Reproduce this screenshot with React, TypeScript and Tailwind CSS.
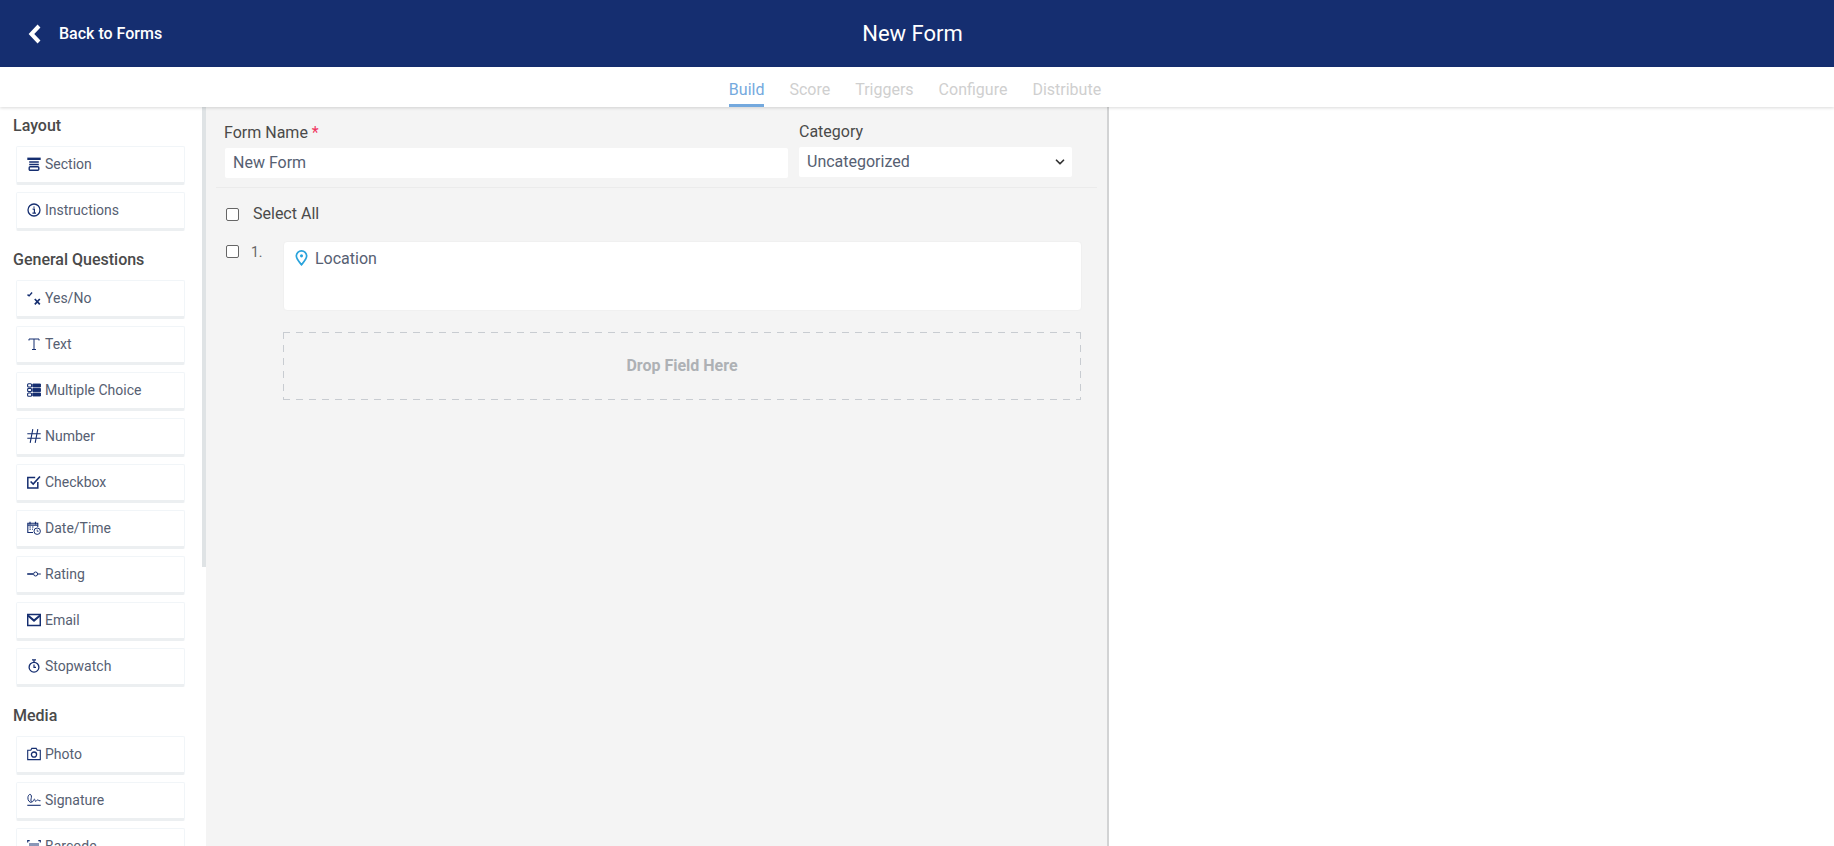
import type { ReactNode } from 'react';
import { ChevronDown } from 'lucide-react';

function Ic({ children }: { children: ReactNode }) {
  return (
    <svg className="w-[14px] h-[14px] shrink-0 text-[#152e70]" viewBox="0 0 14 14" fill="none" stroke="currentColor" strokeWidth={1.2}>
      {children}
    </svg>
  );
}

const icons: Record<string, ReactNode> = {
  Section: (
    <Ic>
      <path d="M0.3 0.6h13.4v2.4h-13.4z" fill="currentColor" stroke="none" />
      <path d="M2.2 5h9.6M2.2 7.5h9.6" strokeWidth={1.6} />
      <rect x="2.2" y="9.8" width="9.6" height="3.4" rx="1" strokeWidth={1.4} />
    </Ic>
  ),
  Instructions: (
    <Ic>
      <circle cx="7" cy="7" r="6" strokeWidth={1.3} />
      <path d="M7 3.4v1.4M5.6 6.2H7.4V10M5.4 10.2h3.6" strokeWidth={1.2} />
    </Ic>
  ),
  'Yes/No': (
    <Ic>
      <path d="M0.5 3.6l1.6 1.3 3-3.4" strokeWidth={1.4} />
      <path d="M7.8 8l5 5.4M12.8 8l-5 5.4" strokeWidth={1.7} />
    </Ic>
  ),
  Text: (
    <Ic>
      <path d="M2 3.5V2h10v1.5M7 2v10.5M5 12.5h4" strokeWidth={1} />
    </Ic>
  ),
  'Multiple Choice': (
    <Ic>
      <rect x="0.6" y="0.8" width="4" height="3.2" rx="1" strokeWidth={1.1} />
      <rect x="0.6" y="5.4" width="4" height="3.2" rx="1" strokeWidth={1.1} />
      <rect x="0.6" y="10" width="4" height="3.2" rx="1" strokeWidth={1.1} />
      <path d="M5.8 1h7.7v3H5.8zM5.8 5.5h7.7v3H5.8zM5.8 10h7.7v3H5.8z" strokeWidth={0.9} fill="currentColor" />
    </Ic>
  ),
  Number: (
    <Ic>
      <path d="M5.8 0.2L3.2 13.8M10.8 0.2L8.2 13.8M0.3 4.8h13.4M0.3 9.2h13.4" strokeWidth={1.1} />
    </Ic>
  ),
  Checkbox: (
    <Ic>
      <path d="M10.8 7v6H0.8V2.6h7.4" strokeWidth={1.5} />
      <path d="M3.6 6.5l2.6 2.6 6.8-7.6" strokeWidth={1.6} />
    </Ic>
  ),
  'Date/Time': (
    <Ic>
      <path d="M6 11.5H0.8V2.2h10V6" strokeWidth={1.1} />
      <path d="M3 0.8v2.4M8.5 0.8v2.4M0.8 4.2h10" strokeWidth={1.2} />
      <path d="M2.4 6h1.5M5 6h1.5M2.4 8.2h1.5M5 8.2h1" strokeWidth={1} />
      <circle cx="10.2" cy="10.2" r="3.2" strokeWidth={1} />
      <path d="M10.2 8.6v1.7h1.4" strokeWidth={0.8} />
    </Ic>
  ),
  Rating: (
    <Ic>
      <path d="M0.2 7h6" strokeWidth={1.6} />
      <circle cx="8.6" cy="7" r="2" strokeWidth={1} />
      <path d="M10.8 7h3" strokeWidth={1} />
    </Ic>
  ),
  Email: (
    <Ic>
      <rect x="0.7" y="1.5" width="12.6" height="11" strokeWidth={1.5} />
      <path d="M1 2.6l6 5L13 2.6" strokeWidth={2} />
    </Ic>
  ),
  Stopwatch: (
    <Ic>
      <circle cx="7" cy="8.2" r="4.9" strokeWidth={1.3} />
      <path d="M5 0.8h4M7 1v2.2M7 5.4v3h2" strokeWidth={1.2} />
    </Ic>
  ),
  Photo: (
    <Ic>
      <path d="M0.7 3.2h3.1l1-1.8h4.4l1 1.8h3.1v9.4H0.7z" strokeWidth={1.1} />
      <circle cx="7" cy="7.6" r="2.6" strokeWidth={1.3} />
    </Ic>
  ),
  Signature: (
    <Ic>
      <path d="M4.5 9.5C2.5 9.5 0.8 7.5 0.9 4.8 1 2.8 2 1.2 3.2 1.4c1.3.2 1.5 2.4.9 4.4C3.7 7.4 4 9 5 9c1.2 0 1.6-2.8 2.4-2.8.7 0 .5 2.2 1.2 2.2.9 0 1.4-1.6 2.2-1.6.6 0 .7.9 1.2.9H13.5" strokeWidth={1} />
      <path d="M0.3 12.3h13.4" strokeWidth={1.1} />
    </Ic>
  ),
  Barcode: (
    <Ic>
      <path d="M0.7 3.5V1.6h2M11.3 1.6h2v1.9M0.7 10.5v1.9h2M11.3 12.4h2v-1.9" strokeWidth={1.1} />
      <path d="M3 4v6M5 4v6M7 4v6M9 4v6M11 4v6" strokeWidth={1} />
    </Ic>
  ),
};

function FieldCard({ label }: { label: string }) {
  return (
    <div className="ml-[16px] mb-[7px] h-[39px] w-[169px] shrink-0 flex items-center gap-[4px] pl-[10px] pb-[1px] bg-white rounded-[2px] border border-[#f1f5f8] border-b-[3px] border-b-[#eceff1] text-[14px] text-[#566072]">
      {icons[label]}
      <span>{label}</span>
    </div>
  );
}

function Group({ title, items, cls }: { title: string; items: string[]; cls: string }) {
  return (
    <div className="flex flex-col">
      <h3 className={`pl-[13px] text-[16px] font-medium leading-[20px] text-[#4a4a4a] ${cls}`}>{title}</h3>
      {items.map((item) => (
        <FieldCard key={item} label={item} />
      ))}
    </div>
  );
}

export default function App() {
  const tabs = ['Build', 'Score', 'Triggers', 'Configure', 'Distribute'];

  return (
    <div className="h-[846px] w-[1834px] overflow-hidden flex flex-col bg-white font-['Roboto',sans-serif]">
      {/* Top bar */}
      <header className="relative h-[67px] shrink-0 flex items-center justify-center pr-[9px] bg-[#152e70]">
        <div className="absolute left-[28px] top-[22px] flex items-center gap-[18px] text-white">
          <svg className="w-[13px] h-[20px]" viewBox="0 0 13 20" fill="none" stroke="currentColor" strokeWidth={4}>
            <path d="M11 2L3.4 10l7.6 8" />
          </svg>
          <span className="text-[16px] font-medium">Back to Forms</span>
        </div>
        <h1 className="text-[22px] text-white">New Form</h1>
      </header>

      {/* Tabs */}
      <nav className="relative z-10 h-[40px] shrink-0 flex justify-center gap-[25px] pr-[4px] bg-white shadow-[0_1px_3px_rgba(0,0,0,0.15)] text-[16px] text-[#cfcfcf]">
        {tabs.map((tab, i) => (
          <span
            key={tab}
            className={`h-[40px] pt-[11px] leading-[24px] ${i === 0 ? 'text-[#74a9de] border-b-[3px] border-[#74a9de]' : ''}`}
          >
            {tab}
          </span>
        ))}
      </nav>

      <div className="flex flex-1 min-h-0">
        {/* Field palette */}
        <aside className="relative w-[206px] shrink-0 overflow-hidden bg-white pt-[9px]">
          <Group title="Layout" cls="mb-[10px]" items={['Section', 'Instructions']} />
          <Group title="General Questions" cls="mt-[12px] mb-[10px]" items={['Yes/No', 'Text', 'Multiple Choice', 'Number', 'Checkbox', 'Date/Time', 'Rating', 'Email', 'Stopwatch']} />
          <Group title="Media" cls="mt-[12px] mb-[10px]" items={['Photo', 'Signature', 'Barcode']} />
          <div className="absolute right-0 top-0 h-[460px] w-[4px] bg-[#dfe3e5]" />
        </aside>

        {/* Form builder */}
        <main className="w-[903px] shrink-0 bg-[#f4f4f4] border-r-2 border-[#d2d3d4] px-[10px]">
          <div className="flex gap-[11px] pl-[9px] pt-[15px] pb-[9px] h-[81px] border-b border-[#ebebeb]">
            <div className="w-[563px]">
              <label className="block -ml-[1px] text-[16px] leading-[22px] text-[#4a4a4a]">
                Form Name <span className="text-[#f0345f]">*</span>
              </label>
              <div className="mt-[4px] h-[30px] pl-[8px] flex items-center bg-white rounded-[2px] text-[16px] text-[#566072]">New Form</div>
            </div>
            <div className="w-[273px] -mt-[1px]">
              <label className="block text-[16px] leading-[22px] text-[#4a4a4a]">Category</label>
              <div className="mt-[4px] h-[30px] pl-[8px] pr-[5px] flex items-center justify-between bg-white rounded-[2px] text-[16px] text-[#566072]">
                Uncategorized
                <ChevronDown className="w-[14px] h-[14px] text-[#333]" strokeWidth={3} />
              </div>
            </div>
          </div>

          <div className="flex items-center pl-[10px] mt-[15px] h-[22px] text-[16px] text-[#4a4a4a]">
            <input type="checkbox" readOnly className="w-[13px] h-[13px] appearance-none bg-white border border-[#666] rounded-[2px]" />
            <span className="ml-[14px]">Select All</span>
          </div>

          <div className="flex pl-[10px] mt-[16px]">
            <input type="checkbox" readOnly className="mt-[4px] w-[13px] h-[13px] appearance-none bg-white border border-[#666] rounded-[2px]" />
            <span className="ml-[12px] mt-[1px] w-[32px] text-[14px] leading-[20px] text-[#666]">1.</span>
            <div className="w-[799px]">
              <div className="h-[70px] flex items-start gap-[7px] pl-[11px] pt-[5px] bg-white rounded-[4px] border border-[#f0f0f0] text-[16px] leading-[24px] text-[#566072]">
                <svg className="mt-[3px] w-[13px] h-[16px] text-[#29a3dc]" viewBox="0 0 14 18" fill="none" stroke="currentColor" strokeWidth={1.9}>
                  <path d="M7 16.6C4.5 13.5 1.2 10 1.2 6.8a5.8 5.8 0 0 1 11.6 0C12.8 10 9.5 13.5 7 16.6z" />
                  <circle cx="7" cy="6.6" r="1.7" fill="currentColor" stroke="none" />
                </svg>
                <span>Location</span>
              </div>
              <div className="mt-[21px] h-[68px] w-[798px] flex items-center justify-center bg-no-repeat [background-image:repeating-linear-gradient(90deg,#c8ccd1_0_7px,transparent_7px_13px),repeating-linear-gradient(90deg,#c8ccd1_0_7px,transparent_7px_13px),repeating-linear-gradient(180deg,#c8ccd1_0_7px,transparent_7px_13px),repeating-linear-gradient(180deg,#c8ccd1_0_7px,transparent_7px_13px)] [background-size:100%_1px,100%_1px,1px_100%,1px_100%] [background-position:0_0,0_100%,0_0,100%_0] text-[16px] font-bold text-[#aeb1b5]">
                Drop Field Here
              </div>
            </div>
          </div>
        </main>

        <div className="flex-1 bg-white" />
      </div>
    </div>
  );
}
